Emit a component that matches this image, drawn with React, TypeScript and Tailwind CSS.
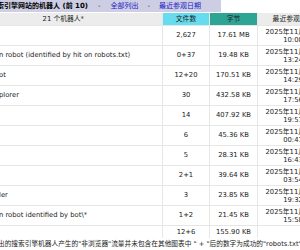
const rows = [
  { name: "", files: "2,627", bytes: "17.61 MB", time: "10:08" },
  { name: "n robot (identified by hit on robots.txt)", files: "0+37", bytes: "19.48 KB", time: "13:24" },
  { name: "ot", files: "12+20", bytes: "170.51 KB", time: "14:29" },
  { name: "plorer", files: "30", bytes: "432.58 KB", time: "17:56" },
  { name: "", files: "14", bytes: "407.92 KB", time: "19:51" },
  { name: "", files: "6", bytes: "45.36 KB", time: "00:41" },
  { name: "", files: "5", bytes: "28.31 KB", time: "16:43" },
  { name: "", files: "2+1", bytes: "39.64 KB", time: "03:54" },
  { name: "ler", files: "3", bytes: "23.85 KB", time: "19:32" },
  { name: "n robot identified by bot\\*", files: "1+2", bytes: "21.45 KB", time: "15:58" },
];

export default function App() {
  return (
    <div
      className="w-[300px] h-[250px] overflow-hidden bg-white text-[6.8px] text-[#222]"
      style={{ fontFamily: '"DejaVu Sans", "Noto Sans CJK SC", sans-serif' }}
    >
      <div className="flex h-[12px] mb-px">
        <div className="w-[221px] shrink-0 bg-[#cdcde3] flex items-center whitespace-nowrap overflow-hidden text-[7px]">
          <span className="ml-[-3px] font-bold text-black">索引擎网站的机器人 (前 10)</span>
          <span className="mx-[10px] text-[#333]">-</span>
          <span className="text-[#1a1acc]">全部列出</span>
          <span className="mx-[9px] text-[#333]">-</span>
          <span className="text-[#1a1acc]">最近参观日期</span>
        </div>
        <div className="flex-1 bg-white" />
      </div>

      <div className="grid grid-cols-[162px_46px_47px_70px] gap-px bg-[#e6e6e6] w-[328px]">
        <div className="h-[12px] bg-[#ececec] flex items-center justify-end pr-[78px] whitespace-nowrap">
          21 个机器人*
        </div>
        <div className="h-[12px] bg-[#66dcee] flex items-center justify-center">文件数</div>
        <div className="h-[12px] bg-[#2ea495] flex items-center justify-center">字节</div>
        <div className="h-[12px] bg-[#ececec] flex items-center justify-center">最近参观日期</div>

        {rows.map((r, i) => (
          <Row key={i} {...r} />
        ))}

        <div className="h-[12px] bg-white" />
        <div className="h-[12px] bg-white flex items-center justify-center">12+6</div>
        <div className="h-[12px] bg-white flex items-center justify-center">155.90 KB</div>
        <div className="h-[12px] bg-white" />
      </div>

      <div className="h-[12px] flex items-center whitespace-nowrap text-[6.7px] text-[#222] bg-white">
        <span className="ml-[-2px]">出的搜索引擎机器人产生的"非浏览器"流量并未包含在其他图表中 " + "后的数字为成功的"robots.txt"点击数</span>
      </div>
    </div>
  );
}

function Row({ name, files, bytes, time }: { name: string; files: string; bytes: string; time: string }) {
  return (
    <>
      <div className="h-[19px] bg-white flex items-center whitespace-nowrap overflow-hidden">
        <span className="ml-[-1px]">{name}</span>
      </div>
      <div className="h-[19px] bg-white flex items-center justify-center">{files}</div>
      <div className="h-[19px] bg-white flex items-center justify-center">{bytes}</div>
      <div className="h-[19px] bg-white flex flex-col items-center justify-center leading-[8px] whitespace-nowrap">
        <span>2025年11月06日</span>
        <span>{time}</span>
      </div>
    </>
  );
}
